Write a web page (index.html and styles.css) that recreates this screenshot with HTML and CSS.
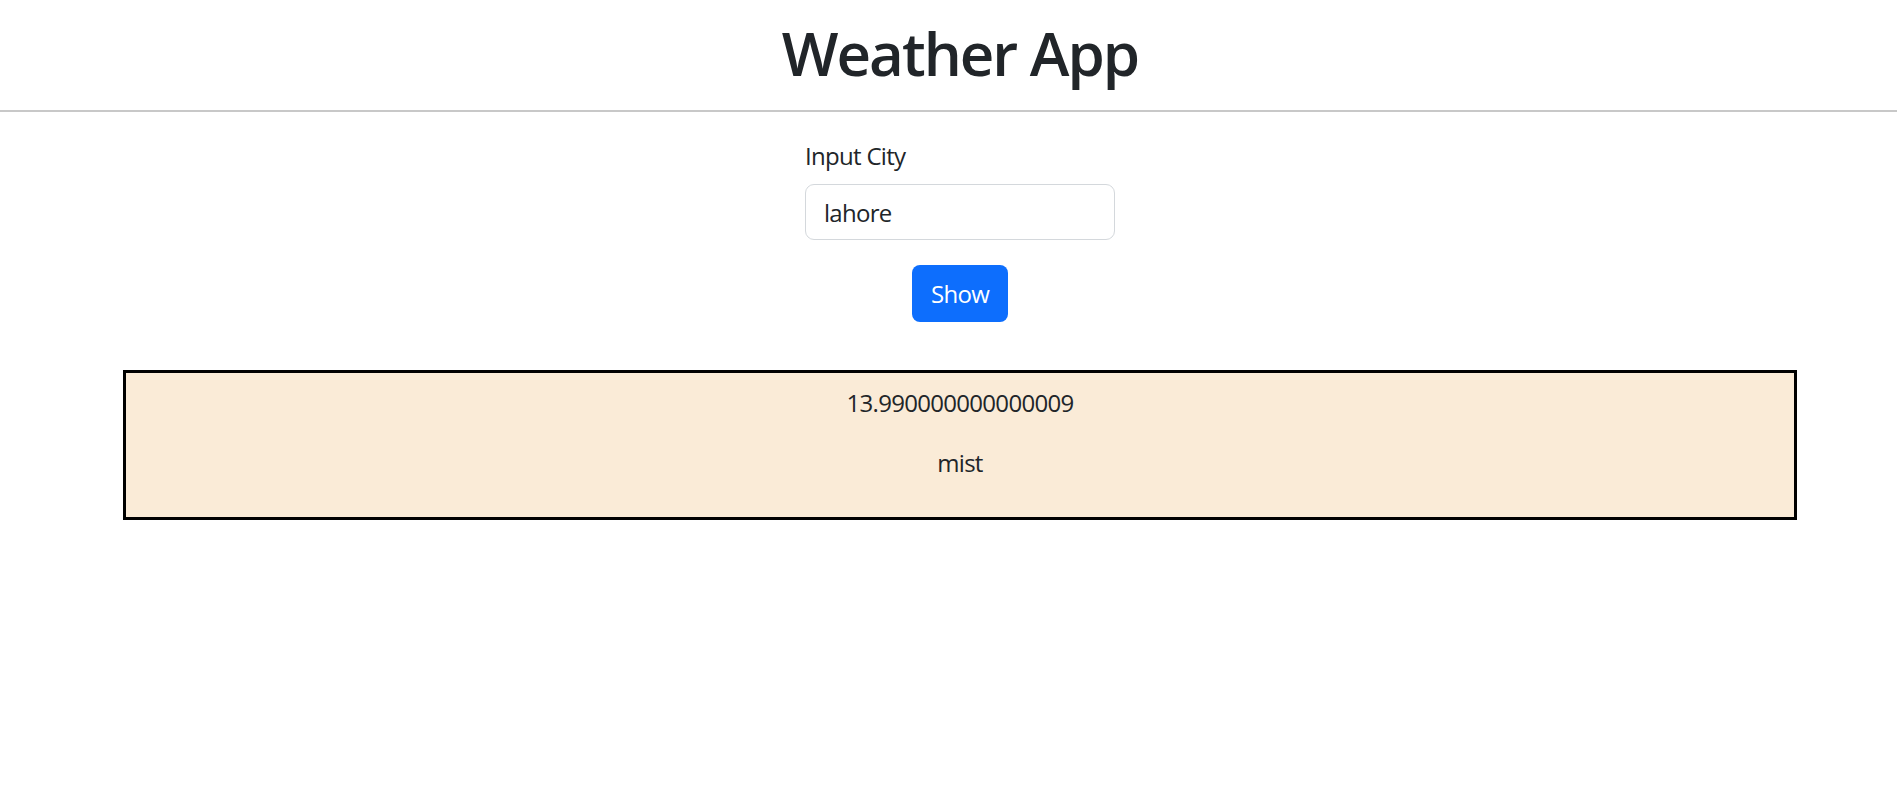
FILE: index.html
```html
<!DOCTYPE html>
<html lang="en">
<head>
<meta charset="utf-8">
<title>Weather App</title>
<link rel="stylesheet" href="styles.css">
</head>
<body>
<header class="header">
  <h1 class="title">Weather App</h1>
</header>
<hr class="divider">
<main class="page">
  <form class="search">
    <label class="label" for="city">Input City</label>
    <input class="field" id="city" type="text" value="lahore">
    <button class="btn" type="button">Show</button>
  </form>
  <section class="result">
    <p class="result-line">13.990000000000009</p>
    <p class="result-line">mist</p>
  </section>
</main>
</body>
</html>
```
FILE: styles.css
```css
* { box-sizing: border-box; }
html, body { margin: 0; padding: 0; background: #fff; }
body {
  font-family: "Open Sans", "Noto Sans", sans-serif;
  font-size: 24px;
  line-height: 1.5;
  color: #212529;
  letter-spacing: -0.7px;
}
.header {
  padding-left: 23px;
  display: flex;
  justify-content: center;
  padding-top: 17px;
}
.title {
  margin: 0;
  font-size: 60px;
  line-height: 72px;
  font-weight: 600;
  letter-spacing: -2px;
}
.divider {
  margin: 21px 0 0;
  border: 0;
  height: 2px;
  background: #c8c8c8;
}
.page {
  padding-left: 23px;
  display: flex;
  flex-direction: column;
  align-items: center;
}
.search {
  display: flex;
  flex-direction: column;
  align-items: center;
  width: 310px;
  padding-top: 26px;
}
.label {
  align-self: flex-start;
  line-height: 36px;
  margin-bottom: 10px;
}
.field {
  width: 310px;
  height: 56px;
  padding: 9px 18px;
  font: inherit;
  letter-spacing: inherit;
  color: #212529;
  border: 1.5px solid #d4d8dc;
  border-radius: 9px;
  outline: none;
}
.btn {
  margin-top: 25px;
  width: 96px;
  height: 57px;
  font: inherit;
  letter-spacing: inherit;
  color: #fff;
  background: #0d6efd;
  border: 0;
  border-radius: 8px;
  padding: 0;
}
.result {
  margin-top: 48px;
  width: 1674px;
  height: 150px;
  border: 3px solid #000;
  background: #faebd7;
  padding: 12px 0;
  text-align: center;
}
.result-line {
  margin: 0 0 24px;
  line-height: 36px;
}
```
